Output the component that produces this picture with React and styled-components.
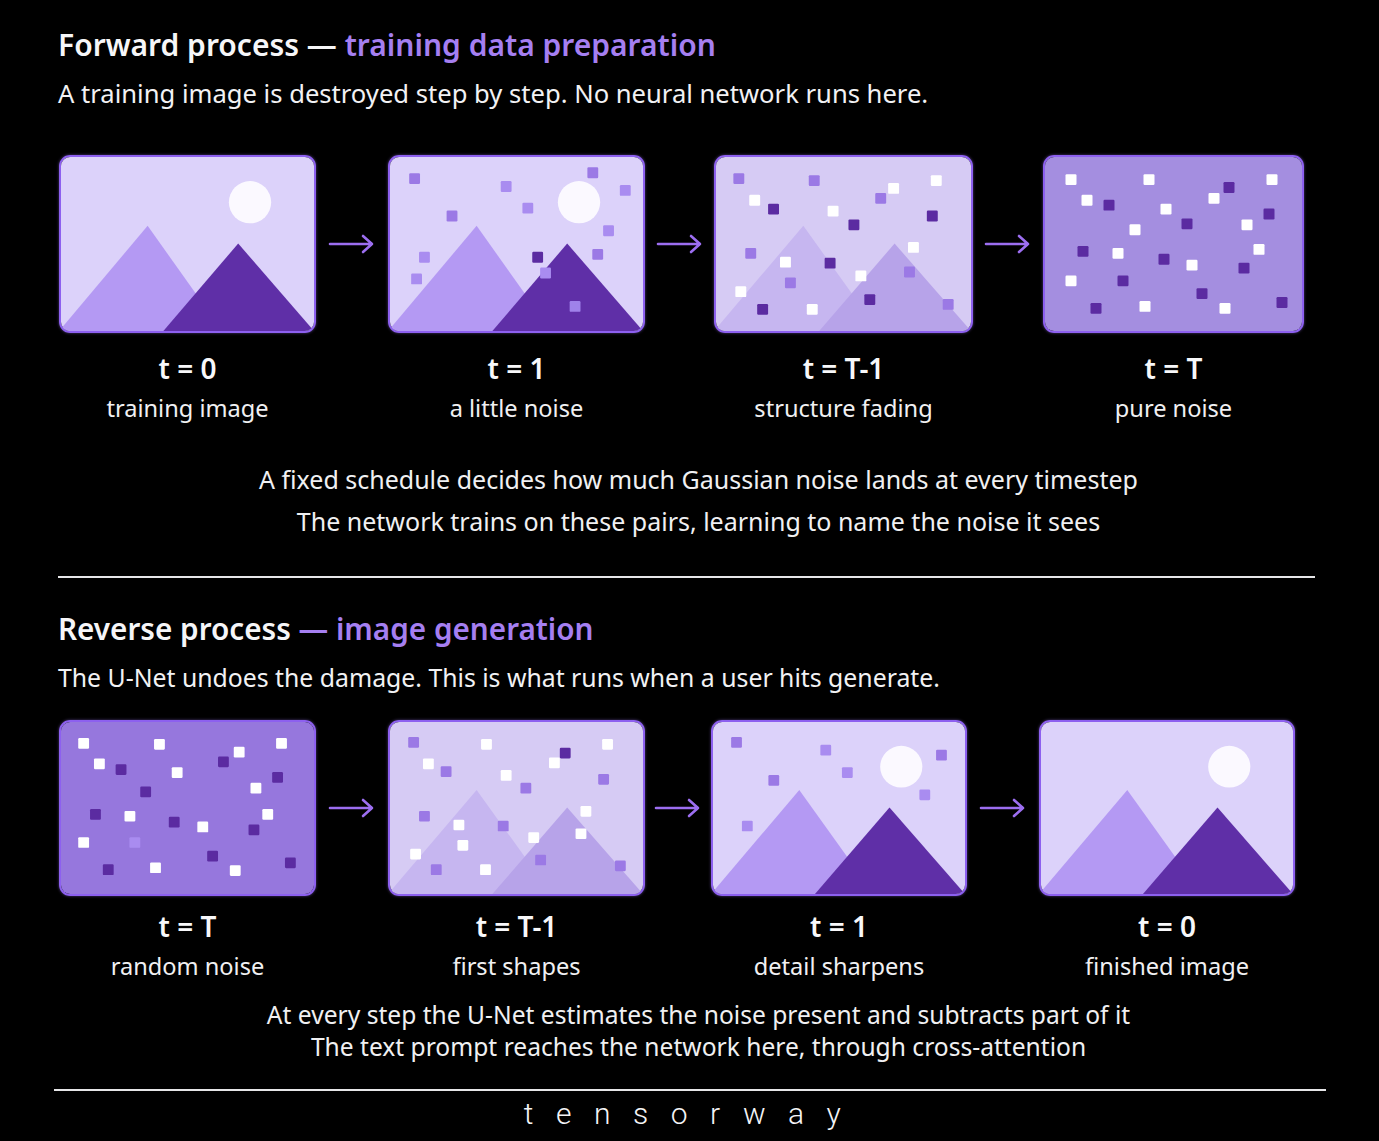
import React from 'react'
import styled, { createGlobalStyle } from 'styled-components'

const GlobalStyle = createGlobalStyle`
  html, body {
    margin: 0;
    padding: 0;
    background: #000;
  }
  body {
    font-family: "Noto Sans", "Open Sans", sans-serif;
    color: #f4f4f6;
  }
`

const COLORS = {
  w: '#ffffff',
  d: '#5b2ba1',
  m: '#9b79e5',
  p: '#a98cf0',
  l: '#9f82ea',
}

const W = 257
const H = 177

// shared scene geometry, only colours and noise change
const Scene = ({ bg, light, dark, sun, dots = [] }) => (
  <svg width="100%" height="100%" viewBox={`0 0 ${W} ${H}`} preserveAspectRatio="none">
    <rect width={W} height={H} fill={bg} />
    {sun && <circle cx="192" cy="46" r="21.5" fill="#fbf9ff" />}
    {light && <polygon points="-2,177 88,70 164,177" fill={light} />}
    {dark && <polygon points="104,177 180,88 257,177" fill={dark} />}
    {dots.map(([x, y, c], i) => (
      <rect key={i} x={x - 5.5} y={y - 5.5} width="11" height="11" rx="1.2" fill={COLORS[c]} />
    ))}
  </svg>
)

const faint = { bg: '#d6cbf4', light: '#c6b6f0', dark: '#b7a3e9' }
const clean = { bg: '#dcd2fa', light: '#b499f3', dark: '#5f2fa7', sun: true }

const forward = [
  { t: 't = 0', label: 'training image', scene: clean },
  {
    t: 't = 1',
    label: 'a little noise',
    scene: {
      ...clean,
      dots: [
        [25, 22, 'm'], [118, 30, 'p'], [206, 16, 'm'], [239, 34, 'p'], [63, 60, 'm'],
        [140, 52, 'p'], [222, 75, 'p'], [211, 99, 'm'], [35, 102, 'p'], [150, 102, 'd'],
        [158, 118, 'p'], [27, 124, 'p'], [188, 152, 'l'],
      ],
    },
  },
  {
    t: 't = T-1',
    label: 'structure fading',
    scene: {
      ...faint,
      dots: [
        [23, 22, 'm'], [99, 24, 'm'], [222, 24, 'w'], [179, 32, 'w'], [166, 42, 'm'],
        [39, 44, 'w'], [58, 53, 'd'], [118, 55, 'w'], [218, 60, 'd'], [139, 69, 'd'],
        [35, 98, 'm'], [199, 92, 'w'], [70, 107, 'w'], [115, 108, 'd'], [146, 121, 'w'],
        [195, 117, 'm'], [75, 128, 'm'], [25, 137, 'w'], [155, 145, 'd'], [47, 155, 'd'],
        [97, 155, 'w'], [234, 150, 'm'],
      ],
    },
  },
  {
    t: 't = T',
    label: 'pure noise',
    scene: {
      bg: '#a48ee0',
      dots: [
        [26, 23, 'w'], [104, 23, 'w'], [227, 23, 'w'], [184, 31, 'd'], [42, 44, 'w'],
        [64, 49, 'd'], [169, 42, 'w'], [121, 53, 'w'], [224, 58, 'd'], [142, 68, 'd'],
        [202, 69, 'w'], [90, 74, 'w'], [214, 94, 'w'], [38, 96, 'd'], [73, 98, 'w'],
        [119, 104, 'd'], [147, 110, 'w'], [199, 113, 'd'], [26, 126, 'w'], [78, 126, 'd'],
        [157, 139, 'd'], [237, 148, 'd'], [51, 154, 'd'], [100, 152, 'w'], [180, 154, 'w'],
      ],
    },
  },
]

const reverse = [
  {
    t: 't = T',
    label: 'random noise',
    scene: {
      bg: '#9677dd',
      dots: [
        [23, 22, 'w'], [100, 23, 'w'], [181, 31, 'w'], [224, 22, 'w'], [39, 43, 'w'],
        [61, 49, 'd'], [118, 52, 'w'], [165, 41, 'd'], [220, 57, 'd'], [86, 72, 'd'],
        [198, 68, 'w'], [35, 95, 'd'], [70, 97, 'w'], [115, 103, 'd'], [144, 108, 'w'],
        [196, 111, 'd'], [210, 95, 'w'], [23, 124, 'w'], [75, 124, 'p'], [154, 138, 'd'],
        [233, 145, 'd'], [48, 152, 'd'], [96, 150, 'w'], [177, 153, 'w'],
      ],
    },
  },
  {
    t: 't = T-1',
    label: 'first shapes',
    scene: {
      ...faint,
      dots: [
        [24, 21, 'm'], [98, 23, 'w'], [221, 23, 'w'], [178, 32, 'd'], [167, 42, 'w'],
        [39, 43, 'w'], [57, 51, 'm'], [118, 55, 'w'], [138, 68, 'm'], [217, 59, 'm'],
        [35, 97, 'm'], [70, 106, 'w'], [115, 107, 'm'], [199, 92, 'w'], [146, 119, 'w'],
        [194, 115, 'w'], [74, 127, 'w'], [26, 136, 'w'], [153, 142, 'm'], [47, 152, 'm'],
        [97, 152, 'w'], [234, 148, 'm'],
      ],
    },
  },
  {
    t: 't = 1',
    label: 'detail sharpens',
    scene: {
      ...clean,
      dots: [
        [24, 21, 'm'], [115, 29, 'p'], [233, 34, 'm'], [62, 60, 'm'], [137, 52, 'p'],
        [216, 75, 'p'], [35, 107, 'p'],
      ],
    },
  },
  { t: 't = 0', label: 'finished image', scene: clean },
]

const Arrow = () => (
  <svg width="48" height="24" viewBox="0 0 48 24">
    <path d="M2 12 H44 M35 4 L44 12 L35 20" fill="none" stroke="#9c6ef0" strokeWidth="2.6" strokeLinecap="round" strokeLinejoin="round" />
  </svg>
)

const Pipeline = ({ steps, widths, gaps, cardH }) => (
  <Row>
    {steps.map((s, i) => (
      <React.Fragment key={i}>
        {i > 0 && (
          <ArrowCell $w={gaps[i - 1]} $h={cardH}>
            <Arrow />
          </ArrowCell>
        )}
        <Step $w={widths[i]}>
          <Frame $h={cardH}>
            <Scene {...s.scene} />
          </Frame>
          <TLabel $tight={cardH < 177}>{s.t}</TLabel>
          <StepText>{s.label}</StepText>
        </Step>
      </React.Fragment>
    ))}
  </Row>
)

export default function App() {
  return (
    <Page>
      <GlobalStyle />
      <Title>
        Forward process <Accent $dim>—</Accent> <Accent>training data preparation</Accent>
      </Title>
      <Sub>A training image is destroyed step by step. No neural network runs here.</Sub>
      <Pipeline steps={forward} widths={[257, 257, 259, 261]} gaps={[72, 69, 70]} cardH={178} />
      <Captions>
        <Caption>A fixed schedule decides how much Gaussian noise lands at every timestep</Caption>
        <Caption>The network trains on these pairs, learning to name the noise it sees</Caption>
      </Captions>
      <Divider />
      <Title $second>
        Reverse process <Accent>— image generation</Accent>
      </Title>
      <Sub $second>The U-Net undoes the damage. This is what runs when a user hits generate.</Sub>
      <Pipeline steps={reverse} widths={[257, 257, 256, 256]} gaps={[72, 66, 72]} cardH={176} />
      <Captions $tight>
        <Caption $tight>At every step the U-Net estimates the noise present and subtracts part of it</Caption>
        <Caption $tight>The text prompt reaches the network here, through cross-attention</Caption>
      </Captions>
      <FootRule />
      <Brand>tensorway</Brand>
    </Page>
  )
}

const Page = styled.div`
width: 1379px;
height: 1141px;
box-sizing: border-box;
padding: 27px 58px 0 58px;
background: #000;
overflow: hidden;
`

const Title = styled.h2`
margin: ${p => (p.$second ? '33px 0 0 0' : '0')};
font-size: ${p => (p.$second ? '29.7px' : '30px')};
line-height: 36px;
font-weight: 600;
color: #f6f6f8;
`

const Accent = styled.span`
color: ${p => (p.$dim ? '#f6f6f8' : '#a57ff1')};
`

const Sub = styled.p`
margin: ${p => (p.$second ? '14px 0 27px 0' : '15px 0 45px 0')};
font-size: ${p => (p.$second ? '24.8px' : '25.6px')};
line-height: 32px;
color: #f2f2f4;
`

const Row = styled.div`
display: flex;
align-items: flex-start;
margin-left: 1px;
`

const ArrowCell = styled.div`
width: ${p => p.$w}px;
height: ${p => p.$h}px;
display: flex;
align-items: center;
justify-content: center;
flex-shrink: 0;
`

const Step = styled.div`
width: ${p => p.$w}px;
flex-shrink: 0;
display: flex;
flex-direction: column;
align-items: center;
`

const Frame = styled.div`
width: 100%;
height: ${p => p.$h}px;
box-sizing: border-box;
border: 2px solid #8d60ef;
border-radius: 11px;
overflow: hidden;
box-shadow: 0 0 3px rgba(160, 120, 250, 0.5);
svg { display: block; }
`

const TLabel = styled.div`
margin-top: ${p => (p.$tight ? '13px' : '18px')};
font-size: 28px;
line-height: 34px;
font-weight: 600;
color: #f8f8fa;
`

const StepText = styled.div`
margin-top: 8px;
font-size: 23.6px;
line-height: 30px;
color: #f0f0f2;
`

const Captions = styled.div`
margin-top: ${p => (p.$tight ? '18px' : '35px')};
padding-left: 18px;
text-align: center;
`

const Caption = styled.div`
font-size: ${p => (p.$tight ? '24.6px' : '25px')};
line-height: ${p => (p.$tight ? '32px' : '42px')};
color: #f0f0f2;
`

const Divider = styled.div`
margin-top: 34px;
width: 1257px;
height: 2px;
background: #e6e6e8;
`

const FootRule = styled.div`
margin: 26px 0 0 -4px;
width: 1272px;
height: 2px;
background: #e6e6e8;
`

const Brand = styled.div`
margin-top: 5px;
padding-left: 8px;
text-align: center;
font-family: Roboto, "Liberation Sans", sans-serif;
font-weight: 300;
font-size: 30px;
line-height: 36px;
letter-spacing: 0.75em;
color: #f4f4f6;
`
